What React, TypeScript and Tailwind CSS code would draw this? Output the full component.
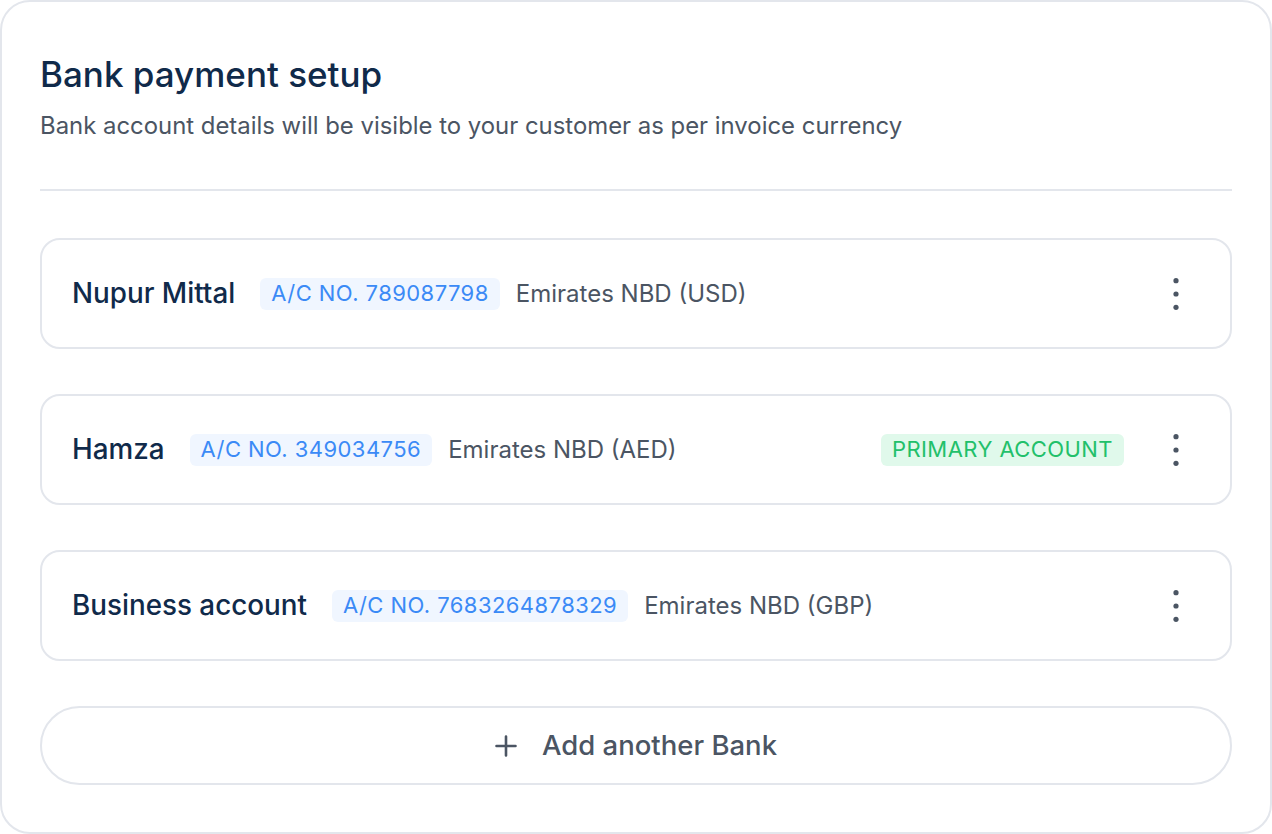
interface BankAccount {
  name: string;
  accountNo: string;
  bank: string;
  primary?: boolean;
}

const accounts: BankAccount[] = [
  { name: "Nupur Mittal", accountNo: "789087798", bank: "Emirates NBD (USD)" },
  { name: "Hamza", accountNo: "349034756", bank: "Emirates NBD (AED)", primary: true },
  { name: "Business account", accountNo: "7683264878329", bank: "Emirates NBD (GBP)" },
];

function KebabIcon() {
  return (
    <svg width="24" height="40" viewBox="0 0 24 40" fill="#4b5563">
      <circle cx="12" cy="6.7" r="2.6" />
      <circle cx="12" cy="20" r="2.6" />
      <circle cx="12" cy="33.3" r="2.6" />
    </svg>
  );
}

function PlusIcon() {
  return (
    <svg width="22" height="22" viewBox="0 0 22 22" stroke="#4b5563" strokeWidth="2.6" strokeLinecap="round">
      <path d="M11 1.5v19M1.5 11h19" />
    </svg>
  );
}

function AccountRow({ account }: { account: BankAccount }) {
  return (
    <div className="flex items-center h-[111px] rounded-[20px] border-2 border-[#e3e6ec] pl-[30px] pr-[42px]">
      <span className="text-[27.8px] font-medium text-[#102a4a] mr-[25px]">{account.name}</span>
      <span className="rounded-md bg-[#f0f6ff] px-[11px] h-8 flex items-center text-[22px] text-[#3b8af6] tracking-[0.02em]">
        A/C NO. {account.accountNo}
      </span>
      <span className="ml-4 text-[24px] text-[#4b5563]">{account.bank}</span>
      <div className="flex-1" />
      {account.primary && (
        <span className="rounded-md bg-[#e0f9eb] px-[11px] h-8 flex items-center text-[22px] text-[#22c06a] tracking-[0.02em] mr-10">
          PRIMARY ACCOUNT
        </span>
      )}
      <KebabIcon />
    </div>
  );
}

export default function App() {
  return (
    <div className="w-[1272px] h-[834px] bg-white" style={{ fontFamily: "Inter, 'Noto Sans', sans-serif" }}>
      <div className="h-full rounded-[30px] border-2 border-[#e3e6ec] bg-white px-[38px] pt-[48px]">
        <h1 className="text-[35px] leading-[48px] font-medium text-[#102a4a]">Bank payment setup</h1>
        <p className="mt-[12px] text-[23.9px] leading-[32px] text-[#4b5563]">
          Bank account details will be visible to your customer as per invoice currency
        </p>
        <div className="mt-[47px] h-[2px] bg-[#e3e6ec]" />
        <div className="mt-[47px] flex flex-col gap-[45px]">
          {accounts.map((a) => (
            <AccountRow key={a.accountNo} account={a} />
          ))}
          <button className="h-[79px] rounded-full border-2 border-[#e3e6ec] flex items-center justify-center gap-[25px] text-[27.5px] font-medium text-[#4b5563]">
            <PlusIcon />
            Add another Bank
          </button>
        </div>
      </div>
    </div>
  );
}
